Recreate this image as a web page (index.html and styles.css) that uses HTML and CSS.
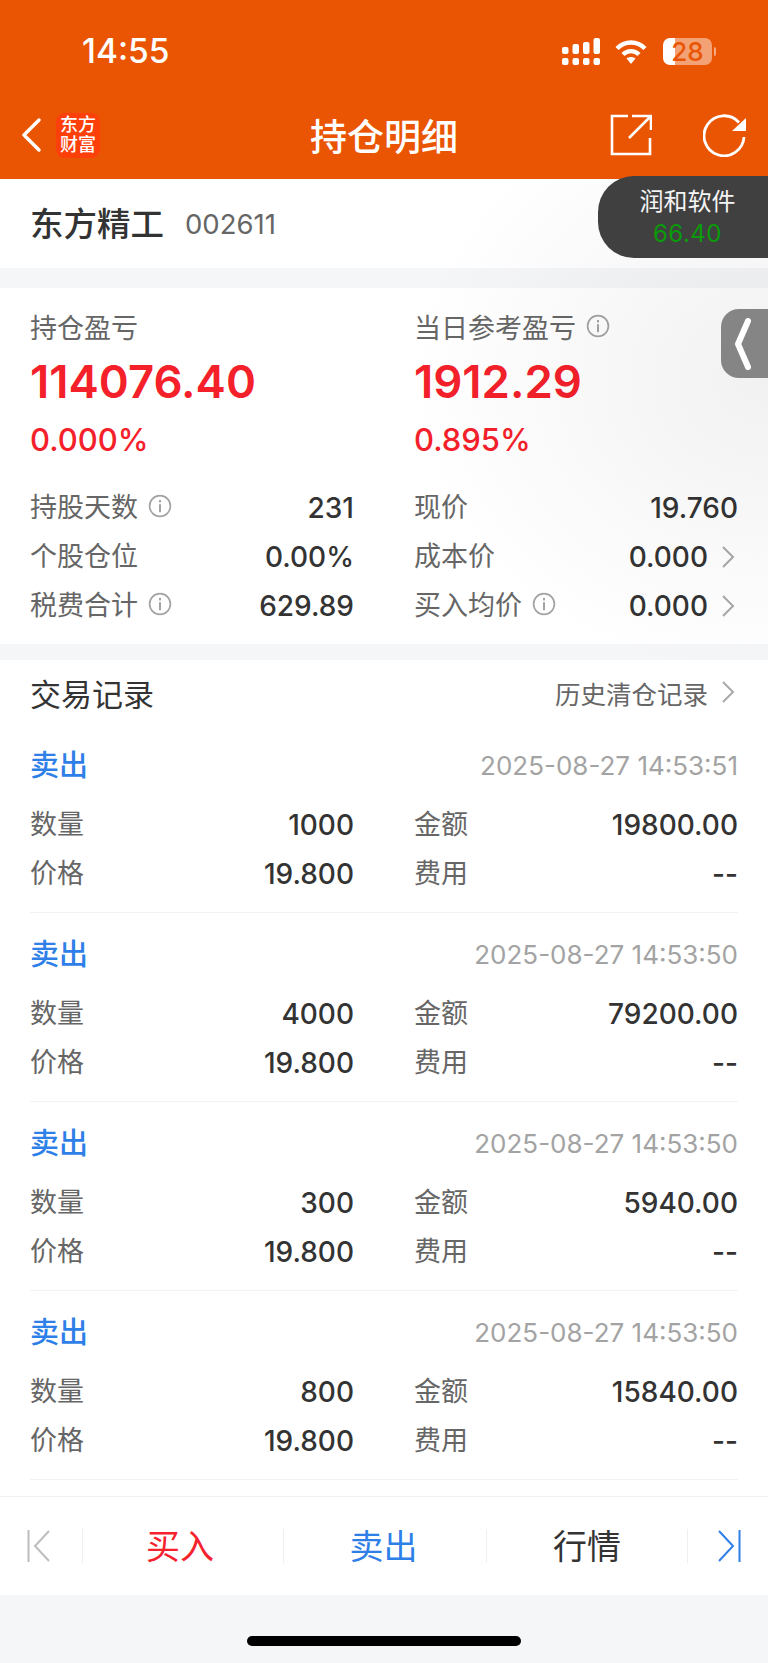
FILE: index.html
```html
<!DOCTYPE html>
<html lang="zh-CN">
<head>
    <meta charset="UTF-8">
    <meta name="viewport" content="width=device-width, initial-scale=1.0">
    <title>持仓明细</title>
    <link rel="stylesheet" href="styles.css">
</head>
<body>
    <svg class="defs" width="0" height="0">
        <symbol id="info" viewBox="0 0 24 24">
            <circle cx="12" cy="12" r="10.4" fill="none" stroke="#a3a3a3" stroke-width="1.7"/>
            <rect x="11" y="10.2" width="2" height="8" fill="#a3a3a3"/>
            <rect x="11" y="6" width="2" height="2.4" fill="#a3a3a3"/>
        </symbol>
        <symbol id="more" viewBox="0 0 14 24">
            <path d="M2 2l10 10L2 22" fill="none" stroke="#a8a8a8" stroke-width="2"/>
        </symbol>
    </svg>

    <header class="top">
        <div class="status">
            <span class="time">14:55</span>
            <div class="status-icons">
                <svg class="signal" width="38" height="27" viewBox="0 0 38 27" fill="#fff">
                    <rect x="0" y="9" width="6.5" height="7" rx="2"/>
                    <rect x="10.5" y="6" width="6.5" height="10" rx="2"/>
                    <rect x="21" y="4" width="6.5" height="12" rx="2"/>
                    <rect x="31.5" y="0" width="6.5" height="16" rx="2"/>
                    <rect x="0" y="20" width="6.5" height="7" rx="2"/>
                    <rect x="10.5" y="20" width="6.5" height="7" rx="2"/>
                    <rect x="21" y="20" width="6.5" height="7" rx="2"/>
                    <rect x="31.5" y="20" width="6.5" height="7" rx="2"/>
                </svg>
                <svg class="wifi" width="32" height="25" viewBox="0 0 32 25">
                    <path d="M2 9.5C10 1.500 22 1.500 30 9.500" fill="none" stroke="#fff" stroke-width="4.400"/>
                    <path d="M8 15.500C12.500 11 19.500 11 24 15.500" fill="none" stroke="#fff" stroke-width="4.400"/>
                    <path d="M11.500 19.500C14 17.500 18 17.500 20.500 19.500L16 25z" fill="#fff"/>
                </svg>
                <div class="battery"><span>28</span></div>
                <i class="battery-nub"></i>
            </div>
        </div>
        <nav class="nav">
            <svg class="back" width="20" height="34" viewBox="0 0 20 34">
                <path d="M18 2L3 17l15 15" fill="none" stroke="#fff" stroke-width="3.400" stroke-linecap="round" stroke-linejoin="round"/>
            </svg>
            <div class="logo">东方<br>财富</div>
            <h1 class="title">持仓明细</h1>
            <svg class="share" width="42" height="42" viewBox="0 0 42 42">
                <path d="M18 2H2v38h38V24M22 2h19v14M41 2L19 24" fill="none" stroke="#fff" stroke-width="2.600"/>
            </svg>
            <svg class="refresh" width="44" height="44" viewBox="0 0 44 44">
                <path d="M36 9.500A20 20 0 1 0 41 24" fill="none" stroke="#fff" stroke-width="2.800"/>
                <path d="M43 5v13H29z" fill="#fff"/>
            </svg>
        </nav>
    </header>

    <section class="stock">
        <span class="stock-name">东方精工</span>
        <span class="stock-code">002611</span>
    </section>

    <section class="summary">
        <div class="grid">
            <div class="label">持仓盈亏</div>
            <div class="label">当日参考盈亏<svg class="info"><use href="#info"/></svg></div>
            <div class="big">114076.40</div>
            <div class="big">1912.29</div>
            <div class="pct">0.000%</div>
            <div class="pct">0.895%</div>
        </div>
        <div class="grid rows">
            <div class="row"><span class="key">持股天数<svg class="info"><use href="#info"/></svg></span><span class="val">231</span></div>
            <div class="row"><span class="key">现价</span><span class="val">19.760</span></div>
            <div class="row"><span class="key">个股仓位</span><span class="val">0.00%</span></div>
            <div class="row"><span class="key">成本价</span><span class="val">0.000</span><svg class="more"><use href="#more"/></svg></div>
            <div class="row"><span class="key">税费合计<svg class="info"><use href="#info"/></svg></span><span class="val">629.89</span></div>
            <div class="row"><span class="key">买入均价<svg class="info"><use href="#info"/></svg></span><span class="val">0.000</span><svg class="more"><use href="#more"/></svg></div>
        </div>
    </section>

    <section class="records">
        <div class="records-head">
            <span class="records-title">交易记录</span>
            <span class="records-link">历史清仓记录<svg class="more"><use href="#more"/></svg></span>
        </div>

        <div class="trade">
            <div class="trade-head"><span class="side">卖出</span><span class="date">2025-08-27 14:53:51</span></div>
            <div class="grid">
                <div class="row"><span class="key">数量</span><span class="val">1000</span></div>
                <div class="row"><span class="key">金额</span><span class="val">19800.00</span></div>
                <div class="row"><span class="key">价格</span><span class="val">19.800</span></div>
                <div class="row"><span class="key">费用</span><span class="val">--</span></div>
            </div>
        </div>
        <div class="trade">
            <div class="trade-head"><span class="side">卖出</span><span class="date">2025-08-27 14:53:50</span></div>
            <div class="grid">
                <div class="row"><span class="key">数量</span><span class="val">4000</span></div>
                <div class="row"><span class="key">金额</span><span class="val">79200.00</span></div>
                <div class="row"><span class="key">价格</span><span class="val">19.800</span></div>
                <div class="row"><span class="key">费用</span><span class="val">--</span></div>
            </div>
        </div>
        <div class="trade">
            <div class="trade-head"><span class="side">卖出</span><span class="date">2025-08-27 14:53:50</span></div>
            <div class="grid">
                <div class="row"><span class="key">数量</span><span class="val">300</span></div>
                <div class="row"><span class="key">金额</span><span class="val">5940.00</span></div>
                <div class="row"><span class="key">价格</span><span class="val">19.800</span></div>
                <div class="row"><span class="key">费用</span><span class="val">--</span></div>
            </div>
        </div>
        <div class="trade">
            <div class="trade-head"><span class="side">卖出</span><span class="date">2025-08-27 14:53:50</span></div>
            <div class="grid">
                <div class="row"><span class="key">数量</span><span class="val">800</span></div>
                <div class="row"><span class="key">金额</span><span class="val">15840.00</span></div>
                <div class="row"><span class="key">价格</span><span class="val">19.800</span></div>
                <div class="row"><span class="key">费用</span><span class="val">--</span></div>
            </div>
        </div>
    </section>

    <footer class="actions">
        <div class="act act-prev">
            <svg width="23" height="32" viewBox="0 0 23 32">
                <path d="M1.500 0v32M22 1L8 16l14 15" fill="none" stroke="#bdbdbd" stroke-width="2"/>
            </svg>
        </div>
        <div class="act act-buy">买入</div>
        <div class="act act-sell">卖出</div>
        <div class="act act-quote">行情</div>
        <div class="act act-next">
            <svg width="23" height="32" viewBox="0 0 23 32">
                <path d="M21.500 0v32M1 1l14 15L1 31" fill="none" stroke="#2f7fe8" stroke-width="2"/>
            </svg>
        </div>
    </footer>

    <div class="home"><i class="home-bar"></i></div>

    <!-- floating over the page -->
    <div class="glow"></div>
    <div class="pill">
        <div class="pill-name">润和软件</div>
        <div class="pill-price">66.40</div>
    </div>
    <div class="side-tab">
        <svg width="16" height="52" viewBox="0 0 16 52">
            <path d="M13 3L3 26l10 23" fill="none" stroke="#fff" stroke-width="6" stroke-linecap="round" stroke-linejoin="round"/>
        </svg>
    </div>
</body>
</html>
```

FILE: styles.css
```css
* {
    box-sizing: border-box;
}
body {
    position: relative;
    width: 768px;
    height: 1663px;
    margin: 0;
    overflow: hidden;
    background-color: #f5f6f8;
    color: #333;
    font-family: Inter, "Noto Sans CJK SC", sans-serif;
}
.defs {
    position: absolute;
}

/* orange top */
.top {
    height: 179px;
    background-color: #ea5504;
    color: #fff;
}
.status {
    display: flex;
    justify-content: space-between;
    align-items: center;
    height: 102px;
    padding: 0 52px 0 82px;
}
.time {
    font-size: 33.5px;
    font-weight: 500;
}
.status-icons {
    display: flex;
    align-items: center;
}
.signal {
    margin-right: 15px;
}
.wifi {
    margin-right: 16px;
}
.battery {
    width: 49px;
    height: 27px;
    border-radius: 7px;
    background: linear-gradient(90deg, #fff 12px, rgba(255, 255, 255, 0.45) 12px);
    color: #ea5504;
    font-size: 26px;
    font-weight: 500;
    line-height: 27px;
    text-align: center;
}
.battery-nub {
    width: 2px;
    height: 9px;
    margin-left: 2px;
    border-radius: 0 2px 2px 0;
    background-color: rgba(255, 255, 255, 0.5);
}
.nav {
    position: relative;
    display: flex;
    align-items: center;
    height: 66px;
    padding: 0 21px 0 21px;
}
.back {
    flex: none;
    margin-right: 15px;
}
.logo {
    flex: none;
    width: 44px;
    height: 45px;
    padding-top: 2px;
    border-radius: 9px;
    background-color: #fd3f0a;
    font-size: 18px;
    font-weight: 500;
    line-height: 20px;
    text-align: center;
}
.title {
    flex: 1;
    margin: 0;
    padding-left: 58px;
    font-size: 37px;
    font-weight: 500;
    text-align: center;
}
.share {
    flex: none;
    margin-right: 51px;
}
.refresh {
    flex: none;
}

/* stock name */
.stock {
    display: flex;
    align-items: center;
    height: 89px;
    padding: 0 30px;
    background-color: #fff;
}
.stock-name {
    padding-bottom: 5px;
    font-size: 33.5px;
    font-weight: 500;
}
.stock-code {
    margin-left: 21px;
    color: #666;
    font-size: 27.5px;
}

/* summary */
.summary {
    height: 356px;
    margin-top: 20px;
    padding: 24px 0 14px;
    background-color: #fff;
}
.grid {
    display: grid;
    grid-template-columns: 324px 324px;
    column-gap: 60px;
    padding-left: 30px;
}
.label {
    display: flex;
    align-items: center;
    height: 32px;
    padding-bottom: 4px;
    color: #666;
    font-size: 27px;
}
.big {
    height: 46px;
    margin-top: 15px;
    color: #f4202a;
    font-size: 45.5px;
    font-weight: 600;
    line-height: 46px;
}
.pct {
    height: 36px;
    margin-top: 17px;
    color: #f4202a;
    font-size: 31px;
    font-weight: 500;
    line-height: 36px;
}
.rows {
    margin-top: 25px;
}
.row {
    display: flex;
    align-items: center;
    height: 49px;
}
.key {
    display: flex;
    align-items: center;
    margin-right: auto;
    padding-bottom: 4px;
    color: #666;
    font-size: 27px;
}
.val {
    color: #333;
    font-size: 28px;
    font-weight: 500;
}
.info {
    width: 24px;
    height: 24px;
    margin-left: 10px;
}
.more {
    width: 14px;
    height: 24px;
    margin-left: 13px;
    margin-right: 3px;
}

/* trade records */
.records {
    height: 836px;
    margin-top: 16px;
    background-color: #fff;
}
.records-head {
    display: flex;
    justify-content: space-between;
    align-items: center;
    height: 64px;
    padding: 8px 30px 8px 30px;
}
.records-title {
    font-size: 31px;
    font-weight: 400;
}
.records-link {
    display: flex;
    align-items: center;
    color: #666;
    font-size: 25.5px;
}
.trade {
    height: 189px;
    margin: 0 30px;
    padding-top: 16px;
    border-bottom: 1px solid #f2f3f5;
}
.trade .grid {
    padding-left: 0;
}
.trade-head {
    display: flex;
    justify-content: space-between;
    align-items: center;
    height: 50px;
    margin-bottom: 10px;
}
.side {
    padding-bottom: 4px;
    color: #2f7fe8;
    font-size: 29px;
    font-weight: 500;
}
.date {
    color: #a3a3a3;
    font-size: 26px;
}

/* bottom actions */
.actions {
    display: flex;
    align-items: center;
    height: 99px;
    padding: 0;
    border-top: 1px solid #f0f1f3;
    background-color: #fff;
}
.act {
    display: flex;
    justify-content: center;
    align-items: center;
    height: 34px;
    padding-bottom: 4px;
    font-size: 34px;
    border-left: 1px solid #eeeff1;
}
.act-prev {
    justify-content: flex-start;
    width: 82px;
    padding: 0 0 0 27px;
    border-left: 0;
}
.act-buy {
    width: 201px;
    padding-right: 6px;
    color: #f5222d;
}
.act-sell {
    width: 203px;
    padding-right: 3px;
    color: #2f7fe8;
}
.act-quote {
    width: 201px;
    color: #333;
}
.act-next {
    justify-content: flex-start;
    width: 81px;
    padding: 0 0 0 30px;
}
.home {
    display: flex;
    justify-content: center;
    padding-top: 41px;
}
.home-bar {
    width: 274px;
    height: 10px;
    border-radius: 5px;
    background-color: #000;
}

/* shade + floating bits */
.glow {
    position: absolute;
    top: 179px;
    left: 368px;
    width: 400px;
    height: 560px;
    background: radial-gradient(ellipse 360px 300px at 100% 36%, rgba(0, 0, 0, 0.055), rgba(0, 0, 0, 0));
    pointer-events: none;
}
.pill {
    position: absolute;
    top: 176px;
    left: 598px;
    width: 170px;
    height: 82px;
    padding: 10px 0 0 9px;
    border-radius: 36px 0 0 36px;
    background-color: #404040;
    text-align: center;
}
.pill-name {
    color: #f4f4f4;
    font-size: 24px;
    line-height: 32px;
}
.pill-price {
    color: #0a9a0a;
    font-size: 24px;
    letter-spacing: 0.5px;
    line-height: 32px;
}
.side-tab {
    position: absolute;
    top: 309px;
    left: 721px;
    width: 47px;
    height: 69px;
    padding: 9px 0 0 14px;
    border-radius: 18px 0 0 18px;
    background-color: #858585;
}
```
